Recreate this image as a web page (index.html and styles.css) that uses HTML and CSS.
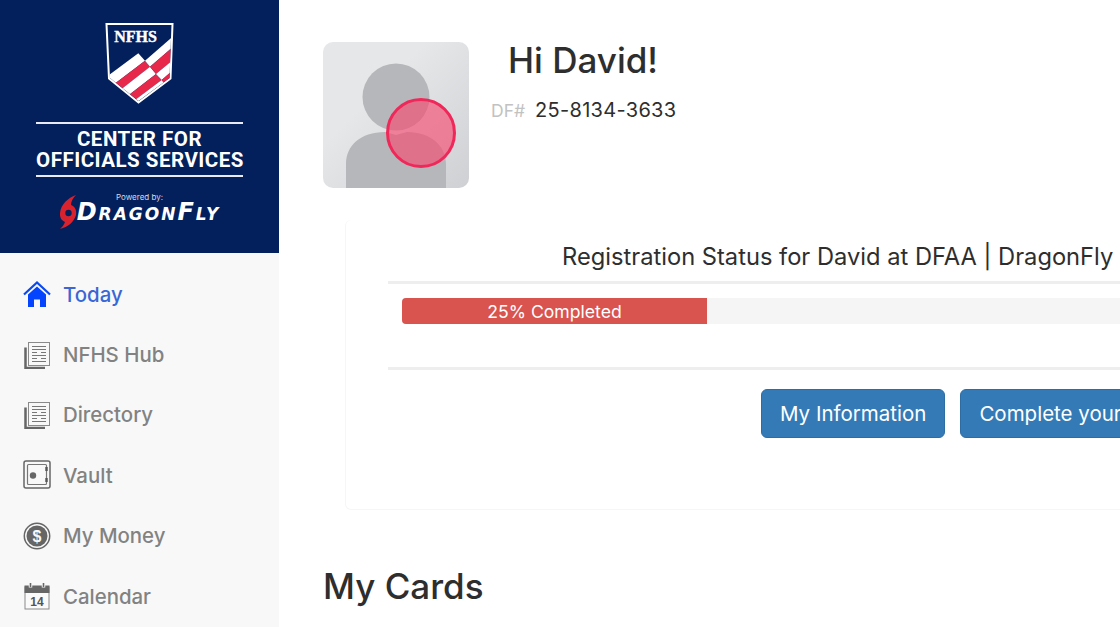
FILE: index.html
```html
<!DOCTYPE html>
<html>
<head>
	<title>Center for Officials Services</title>
	<link rel="stylesheet" href="styles.css">
</head>
<body>
	<div class="app">
		<aside class="sidebar">
			<div class="brand">
				<svg class="shield" width="70" height="82" viewBox="0 0 70 82">
					<defs>
						<clipPath id="shield-clip"><path d="M2.5 2H66.5L64.5 55L33.5 78L5 55Z"/></clipPath>
					</defs>
					<path d="M1.500 1H67.500L65.500 55.500L33.500 79.500L4 55.500Z" fill="#03205c" stroke="#fff" stroke-width="2"/>
					<g clip-path="url(#shield-clip)">
						<path d="M2 53.5L33.3 30.3L40 37.7L8 62Z" fill="#fff"/>
						<path d="M8 62L40 37.7L45 43.7L14 68Z" fill="#e8284a"/>
						<path d="M14 68L45 43.7L51 51L20 75Z" fill="#fff"/>
						<path d="M20 75L51 51L56.7 57L26 80Z" fill="#e8284a"/>
						<path d="M26 80L56.7 57L63 65L33 84Z" fill="#fff"/>
						<path d="M40 37.7L68 13.5V24L45 43.7Z" fill="#fff"/>
						<path d="M45 43.7L68 24V37L51 51Z" fill="#e8284a"/>
						<path d="M51 51L68 37V47L56.7 57Z" fill="#fff"/>
						<path d="M56.7 57L68 47V60L62 64Z" fill="#e8284a"/>
					</g>
					<text class="shield-text" x="30.500" y="18.500" text-anchor="middle">NFHS</text>
				</svg>
				<div class="brand-title">CENTER FOR<br>OFFICIALS SERVICES</div>
				<div class="powered">Powered by:</div>
				<div class="dragonfly">
					<svg width="20" height="34" viewBox="0 0 20 34">
						<path d="M17 0C9 3 2 9 1 18C.5 24 4 26 6 27C5 30 3 32 1 34C9 32 15 27 17 20C18 14 15 11 12 10C12 6 14 3 17 0Z" fill="#d8232f"/>
						<circle cx="9.500" cy="18" r="3.200" fill="#03205c"/>
					</svg>
					<span class="dragonfly-name">DragonFly</span>
				</div>
			</div>

			<nav class="menu">
				<a href="#" class="menu-item active">
					<svg width="28" height="28" viewBox="0 0 28 28">
						<path d="M1 14.500L14 2.500L27 14.500" fill="none" stroke="#0a48f0" stroke-width="2.200"/>
						<path d="M5 14.500L14 6.500L23 14.500V27H17V19.500H11V27H5Z" fill="#0444ff"/>
					</svg>
					Today
				</a>
				<a href="#" class="menu-item">
					<svg width="28" height="28" viewBox="0 0 28 28">
						<path d="M2.500 6.500V27H22" fill="none" stroke="#666" stroke-width="2.500"/>
						<rect x="5.500" y="1.500" width="21" height="23" fill="#f8f8f8" stroke="#8a8a8a" stroke-width="1"/>
						<path d="M9 5.500H23M9 8.500H23M9 11.500H14M18 11.500H23M9 14.500H23M9 17.500H14M18 17.500H23M9 20.500H23" stroke="#777" stroke-width="1.200"/>
					</svg>
					NFHS Hub
				</a>
				<a href="#" class="menu-item">
					<svg width="28" height="28" viewBox="0 0 28 28">
						<path d="M2.500 6.500V27H22" fill="none" stroke="#666" stroke-width="2.500"/>
						<rect x="5.500" y="1.500" width="21" height="23" fill="#f8f8f8" stroke="#8a8a8a" stroke-width="1"/>
						<path d="M9 5.500H23M9 8.500H23M9 11.500H14M18 11.500H23M9 14.500H23M9 17.500H14M18 17.500H23M9 20.500H23" stroke="#777" stroke-width="1.200"/>
					</svg>
					Directory
				</a>
				<a href="#" class="menu-item">
					<svg width="28" height="30" viewBox="0 0 28 30">
						<rect x="1" y="1" width="26" height="27" rx="2" fill="none" stroke="#666" stroke-width="1.500"/>
						<rect x="4.500" y="4.500" width="19" height="20" rx="1" fill="none" stroke="#777" stroke-width="1.200"/>
						<circle cx="10" cy="15.500" r="3.200" fill="#666"/>
						<path d="M23.500 7V11M23.500 18V22" stroke="#555" stroke-width="2.400"/>
					</svg>
					Vault
				</a>
				<a href="#" class="menu-item">
					<svg width="28" height="28" viewBox="0 0 28 28">
						<circle cx="14" cy="14" r="12.700" fill="none" stroke="#666" stroke-width="1.500"/>
						<circle cx="14" cy="14" r="10.500" fill="#666"/>
						<text class="money-sign" x="14" y="19.800" text-anchor="middle">$</text>
					</svg>
					My Money
				</a>
				<a href="#" class="menu-item">
					<svg width="28" height="28" viewBox="0 0 28 28">
						<rect x="2" y="5" width="24" height="22" fill="#fafafa" stroke="#8a8a8a" stroke-width="1"/>
						<path d="M1.500 3.500H26.500V11H1.500Z" fill="#666"/>
						<path d="M7.500 1V5.500M20.500 1V5.500" stroke="#f8f8f8" stroke-width="3.500"/>
						<path d="M7.500 1V5M20.500 1V5" stroke="#666" stroke-width="1.600"/>
						<text class="calendar-day" x="14" y="24" text-anchor="middle">14</text>
					</svg>
					Calendar
				</a>
			</nav>
		</aside>

		<main class="main">
			<section class="profile">
				<div class="avatar">
					<svg width="146" height="146" viewBox="0 0 146 146">
						<defs>
							<linearGradient id="avatar-bg" x1="0" y1="0" x2="1" y2="1">
								<stop offset="0.350" stop-color="#e6e7e9"/>
								<stop offset="1" stop-color="#cfd0d3"/>
							</linearGradient>
						</defs>
						<rect width="146" height="146" fill="url(#avatar-bg)"/>
						<circle cx="73" cy="55" r="33.500" fill="#b6b7ba"/>
						<path d="M23 146V122C23 104 37 90 62 90L73 93L84 90C108 90 123 104 123 122V146Z" fill="#b6b7ba"/>
					</svg>
					<div class="click-marker"></div>
				</div>
				<div class="profile-text">
					<h1 class="greeting">Hi David!</h1>
					<div class="df-line"><span class="df-label">DF#</span> <span class="df-number">25-8134-3633</span></div>
				</div>
			</section>

			<section class="status-card">
				<h2 class="status-title">Registration Status for David at DFAA | DragonFly</h2>
				<div class="progress">
					<div class="progress-bar" style="width: 25%">25% Completed</div>
				</div>
				<div class="actions">
					<a href="#" class="btn">My Information</a>
					<a href="#" class="btn">Complete your</a>
				</div>
			</section>

			<h2 class="section-title">My Cards</h2>
		</main>
	</div>
</body>
</html>
```

FILE: styles.css
```css
html, body {
  margin: 0;
  height: 100%;
  overflow: hidden;
}

body {
  font-family: Inter, "Liberation Sans", sans-serif;
  color: #2e2e2e;
  background-color: #fff;
}

.app {
  display: flex;
  height: 627px;
}

.sidebar {
  flex: 0 0 279px;
  background-color: #f8f8f8;
}

.brand {
  height: 253px;
  box-sizing: border-box;
  padding-top: 23px;
  background-color: #03205c;
  display: flex;
  flex-direction: column;
  align-items: center;
  color: #fff;
}

.shield {
  display: block;
}

.shield-text {
  font-family: "Liberation Serif", serif;
  font-weight: bold;
  font-size: 16px;
  fill: #fff;
  stroke: #fff;
  stroke-width: .4px;
}

.brand-title {
  width: 207px;
  margin-top: 17px;
  padding: 5px 0 4px;
  border-top: 2px solid #e8ebf2;
  border-bottom: 2px solid #e8ebf2;
  font-family: Roboto, "Liberation Sans", sans-serif;
  font-weight: 700;
  font-size: 20.500px;
  line-height: 21px;
  letter-spacing: .5px;
  text-align: center;
  white-space: nowrap;
}

.powered {
  margin-top: 15px;
  font-size: 8px;
  line-height: 11px;
  color: #d5d9e4;
}

.dragonfly {
  display: flex;
  align-items: center;
  height: 18px;
}

.dragonfly svg {
  margin-right: -2px;
}

.dragonfly-name {
  font-family: "DejaVu Sans", sans-serif;
  font-weight: 700;
  font-style: italic;
  font-variant: small-caps;
  font-size: 24px;
  line-height: 18px;
  letter-spacing: 2px;
}

.menu {
  display: flex;
  flex-direction: column;
  padding: 11px 0 0 23px;
}

.menu-item {
  display: flex;
  align-items: center;
  gap: 12px;
  height: 60.400px;
  font-size: 20.400px;
  font-weight: 500;
  color: #828282;
  text-decoration: none;
}

.menu-item.active {
  color: #3b66d6;
}

.money-sign {
  font-family: "Liberation Sans", sans-serif;
  font-weight: bold;
  font-size: 16px;
  fill: #f8f8f8;
}

.calendar-day {
  font-family: "Liberation Sans", sans-serif;
  font-weight: bold;
  font-size: 12px;
  fill: #555;
}

.main {
  flex: 1;
  min-width: 0;
  overflow: hidden;
  padding: 42px 0 0 44px;
}

.profile {
  display: flex;
}

.avatar {
  position: relative;
  width: 146px;
  height: 146px;
  border-radius: 10px;
  overflow: hidden;
}

.avatar svg {
  display: block;
}

.click-marker {
  position: absolute;
  left: 63px;
  top: 56px;
  width: 70px;
  height: 70px;
  box-sizing: border-box;
  border: 3px solid #f0285a;
  border-radius: 50%;
  background-color: rgba(248, 70, 110, .62);
}

.profile-text {
  padding-left: 22px;
}

.greeting {
  margin: 0 0 0 17px;
  font-size: 35px;
  font-weight: 500;
  line-height: 36px;
}

.df-line {
  margin-top: 20px;
  display: flex;
  align-items: center;
  gap: 10px;
}

.df-label {
  font-size: 17.500px;
  color: #c2c2c2;
}

.df-number {
  font-size: 20px;
  letter-spacing: .3px;
}

.status-card {
  box-sizing: border-box;
  width: 1320px;
  height: 290px;
  margin: 32px 0 0 22px;
  padding: 20px 42px 0;
  border: 1px solid #f6f6f6;
  border-top: 0;
  border-radius: 6px;
}

.status-title {
  margin: 0;
  padding: 0 0 8px 174px;
  border-bottom: 3px solid #eee;
  font-size: 23.700px;
  font-weight: 400;
  line-height: 33px;
  white-space: nowrap;
}

.progress {
  height: 26px;
  margin: 14px 0 0 14px;
  width: 1220px;
  border-radius: 4px;
  background-color: #f5f5f5;
  overflow: hidden;
}

.progress-bar {
  height: 100%;
  background-color: #d9534f;
  color: #fff;
  font-size: 17.600px;
  line-height: 28px;
  text-align: center;
}

.actions {
  display: flex;
  gap: 15px;
  margin-top: 43px;
  padding: 19px 0 0 373px;
  border-top: 3px solid #eee;
}

.btn {
  box-sizing: border-box;
  flex: none;
  height: 49px;
  padding: 0 18px;
  border: 1px solid #2e6da4;
  border-radius: 6px;
  background-color: #337ab7;
  color: #fff;
  font-size: 20.500px;
  line-height: 47px;
  text-decoration: none;
  white-space: nowrap;
}

.section-title {
  margin: 55px 0 0;
  font-size: 35px;
  font-weight: 500;
  line-height: 42px;
}
```
